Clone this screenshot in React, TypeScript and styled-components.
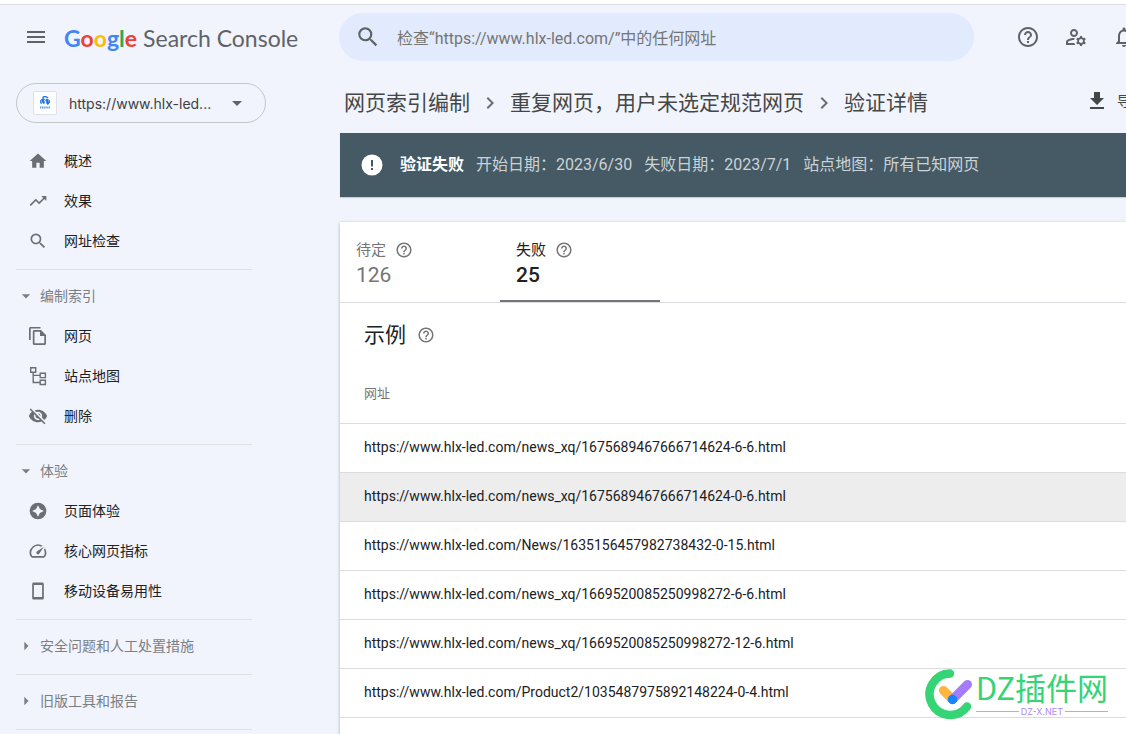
import React from "react";
import styled, { createGlobalStyle } from "styled-components";
import {
  MdMenu, MdSearch, MdHelpOutline, MdOutlineManageAccounts, MdNotificationsNone,
  MdHome, MdTrendingUp, MdVisibilityOff, MdArrowDropDown,
  MdArrowRight, MdOutlineSpeed, MdChevronRight, MdDownload,
} from "react-icons/md";

const GlobalStyle = createGlobalStyle`
  *, *::before, *::after { box-sizing: border-box; }
  body {
    margin: 0;
    background: #f1f4fd;
    color: #202124;
    font-family: Roboto, "Noto Sans CJK SC", sans-serif;
    font-size: 14px;
    line-height: 20px;
  }
  button, input { font: inherit; color: inherit; }
  button { border: 0; padding: 0; background: none; cursor: pointer; }
  a { color: inherit; text-decoration: none; }
  h1, h2, ul, ol, p { margin: 0; padding: 0; font-weight: 400; }
  ul, ol { list-style: none; }
  svg { display: block; flex: none; }
`;

const Page = styled.div`
  position: relative;
  display: flex;
  flex-direction: column;
  min-height: 100vh;
  overflow: hidden;
`;

const TopStrip = styled.div`
  height: 5px;
  background: #fff;
  border-bottom: 1px solid #dadce0;
`;

const Header = styled.header`
  display: flex;
  align-items: center;
  padding: 8px 0;
`;

const Brand = styled.div`
  display: flex;
  align-items: center;
  flex: 0 0 339px;
  padding-left: 24px;
  gap: 16px;
`;

const IconButton = styled.button`
  display: flex;
  align-items: center;
  justify-content: center;
  color: #5f6368;
`;

const Wordmark = styled.a`
  display: flex;
  gap: 6px;
  padding-top: 2px;
  font-family: Lato, "Liberation Sans", sans-serif;
  font-size: 23px;
  line-height: 28px;
  color: #5f6368;
  white-space: nowrap;
`;

const GoogleName = styled.span`
  font-weight: 700;
`;

const Letter = styled.span<{ $color: string }>`
  color: ${(p) => p.$color};
`;

const SearchBox = styled.label`
  display: flex;
  align-items: center;
  flex: 1;
  height: 48px;
  padding: 0 16px;
  gap: 16px;
  border-radius: 24px;
  background: #e1ebfd;
  color: #5f6368;
`;

const SearchInput = styled.input`
  flex: 1;
  min-width: 0;
  padding: 3px 0 0;
  border: 0;
  outline: 0;
  background: transparent;
  font-size: 16px;
  line-height: 24px;
  &::placeholder { color: #757575; opacity: 1; }
`;

const HeaderActions = styled.div`
  display: flex;
  flex: none;
  gap: 24px;
  margin: 0 -10px 0 42px;
`;

const Body = styled.div`
  display: flex;
  flex: 1;
`;

const Sidebar = styled.aside`
  flex: 0 0 340px;
  padding: 14px 0 0 16px;
`;

const PropertyButton = styled.button`
  display: flex;
  align-items: center;
  width: 250px;
  height: 40px;
  padding: 0 16px;
  margin-bottom: 18px;
  border: 1px solid #c4c7c5;
  border-radius: 20px;
  font-family: Inter, "Open Sans", sans-serif;
  color: #3c4043;
  svg { color: #5f6368; }
`;

const Favicon = styled.span`
  display: flex;
  align-items: center;
  justify-content: center;
  width: 24px;
  height: 24px;
  margin-right: 12px;
  border: 1px solid #dfe1e5;
  border-radius: 2px;
  background: #fff;
`;

const PropertyName = styled.span`
  flex: 1;
  padding-top: 1px;
  text-align: left;
  white-space: nowrap;
`;

const Nav = styled.nav`
  width: 236px;
`;

const NavGroup = styled.div`
  padding-bottom: 8px;
  margin-bottom: 6px;
  border-bottom: 1px solid #dfe1e3;
`;

const NavLink = styled.a`
  display: flex;
  align-items: center;
  height: 40px;
  padding-left: 12px;
  gap: 16px;
  svg { color: #6b6e72; }
`;

const GroupToggle = styled.button`
  display: flex;
  align-items: center;
  width: 100%;
  height: 40px;
  gap: 4px;
  color: #7b7e82;
  text-align: left;
`;

const Main = styled.main`
  display: flex;
  flex-direction: column;
  flex: 1;
  min-width: 0;
`;

const TitleBar = styled.div`
  display: flex;
  align-items: center;
  justify-content: space-between;
  height: 64px;
  padding-left: 4px;
`;

const Crumbs = styled.ol`
  display: flex;
  align-items: center;
  padding-top: 3px;
  font-size: 21px;
  line-height: 28px;
  color: #444746;
  white-space: nowrap;
`;

const Crumb = styled.li`
  display: flex;
  align-items: center;
  svg { margin: 0 8px; color: #6b6e72; }
`;

const ExportButton = styled.button`
  display: flex;
  align-items: center;
  gap: 8px;
  flex: none;
  margin-right: -19px;
  color: #444746;
  white-space: nowrap;
`;

const Banner = styled.section`
  display: flex;
  align-items: center;
  height: 64px;
  padding-left: 20px;
  gap: 12px;
  background: #465a65;
  box-shadow: 0 1px 1px rgba(60, 64, 67, 0.2);
  color: #ccd3d6;
  font-size: 16px;
  line-height: 24px;
  white-space: nowrap;
`;

const BannerTitle = styled.strong`
  margin-left: 4px;
  font-weight: 700;
  color: #fff;
`;

const Card = styled.section`
  flex: 1;
  margin-top: 25px;
  background: #fff;
  box-shadow: 0 1px 3px rgba(60, 64, 67, 0.4);
`;

const Tabs = styled.div`
  display: flex;
  border-bottom: 1px solid #dadce0;
`;

const Tab = styled.button<{ $active?: boolean }>`
  display: flex;
  flex-direction: column;
  align-items: flex-start;
  width: 160px;
  height: 80px;
  padding: 16px 16px 0;
  border-bottom: 2px solid ${(p) => (p.$active ? "#757575" : "transparent")};
  color: ${(p) => (p.$active ? "#202124" : "#757575")};
`;

const TabLabel = styled.span`
  display: flex;
  align-items: center;
  gap: 9px;
  font-size: 15px;
  line-height: 24px;
  svg { color: #757575; }
`;

const TabCount = styled.span<{ $active?: boolean }>`
  font-size: 21px;
  line-height: 26px;
  font-weight: ${(p) => (p.$active ? 500 : 400)};
`;

const SectionTitle = styled.h2`
  display: flex;
  align-items: center;
  height: 64px;
  padding-left: 24px;
  gap: 11px;
  font-size: 21px;
  line-height: 28px;
  svg { color: #757575; }
`;

const UrlTable = styled.table`
  width: 100%;
  border-collapse: separate;
  border-spacing: 0;
`;

const HeadCell = styled.th`
  height: 57px;
  padding: 0 24px 2px;
  border-bottom: 1px solid #dadce0;
  font-size: 13px;
  font-weight: 400;
  text-align: left;
  color: #757575;
`;

const UrlRow = styled.tr<{ $hovered?: boolean }>`
  background: ${(p) => (p.$hovered ? "#ededed" : "#fff")};
`;

const UrlCell = styled.td`
  height: 49px;
  padding: 0 24px 2px;
  border-bottom: 1px solid #dadce0;
`;

const Watermark = styled.div`
  position: absolute;
  right: 18px;
  bottom: 16px;
  display: flex;
  align-items: center;
  gap: 3px;
`;

const WatermarkText = styled.div`
  display: flex;
  flex-direction: column;
  gap: 5px;
`;

const WatermarkName = styled.span`
  font-family: "Noto Sans CJK SC", sans-serif;
  font-size: 31px;
  line-height: 30px;
  color: #35d474;
  white-space: nowrap;
`;

const WatermarkSite = styled.span`
  display: flex;
  align-items: center;
  gap: 2px;
  font-family: Inter, sans-serif;
  font-size: 9px;
  line-height: 10px;
  color: #a98bf5;
  &::before, &::after {
    content: "";
    flex: 1;
    height: 1px;
    background: #b9a3f7;
  }
`;

const PagesIcon = () => (
  <svg width="20" height="20" viewBox="0 0 20 20" fill="currentColor">
    <path d="M1 2.500C1 1.600 1.700 1 2.500 1H12.500V2.600H2.700V14H1z" />
    <path fillRule="evenodd" d="M6.300 4H13l5 5v8.500c0 .9-.7 1.500-1.500 1.500H6.300c-.9 0-1.500-.6-1.500-1.500v-12C4.800 4.600 5.400 4 6.300 4zM6.500 5.700v11.600h9.800V10H12V5.700z" />
  </svg>
);

const SitemapIcon = () => (
  <svg width="20" height="20" viewBox="0 0 20 20" fill="none" stroke="currentColor" strokeWidth="1.4">
    <path d="M2.700 1.700h5v4.600h-5zM12.200 7.200h5.200v4.400h-5.200zM12.200 14.200h5.200v4.300h-5.200zM5.200 6.300v10.200h7M5.200 9.400h7" />
  </svg>
);

const ExperienceIcon = () => (
  <svg width="20" height="20" viewBox="0 0 24 24" fill="currentColor">
    <path fillRule="evenodd" d="M12 2a10 10 0 1 0 0 20 10 10 0 0 0 0-20zm0 3 2.300 4.700 4.700 2.300-4.700 2.300L12 19l-2.300-4.700L5 12l4.700-2.300z" />
  </svg>
);

const PhoneIcon = () => (
  <svg width="20" height="20" viewBox="0 0 20 20" fill="currentColor">
    <path fillRule="evenodd" d="M5.800 1.500h8.400c.9 0 1.600.7 1.600 1.600v13.800c0 .9-.7 1.600-1.600 1.600H5.800c-.9 0-1.600-.7-1.600-1.600V3.100c0-.9.7-1.600 1.600-1.600zM5.900 4v12h8.200V4z" />
  </svg>
);

const AlertIcon = () => (
  <svg width="24" height="24" viewBox="0 0 24 24">
    <circle cx="12" cy="12" r="10.500" fill="#fff" />
    <path d="M11 7h2v6.500h-2zM11 15h2v2h-2z" fill="#465a65" />
  </svg>
);

const GlobeIcon = () => (
  <svg width="14" height="14" viewBox="0 0 14 14" fill="none" stroke="#1a73e0">
    <path d="M3.500 7.800A4 4 0 0 1 3 4M4.500 1.600A4.300 4.300 0 0 1 10 2M11.300 4.200A4.300 4.300 0 0 1 9.500 8.500" strokeWidth="1.300" />
    <path d="M3.500 3.200l2.200-1 1 1.300-1.200 1.300 1.300 1.200-.9 1.800-1.600-1.500zM8.200 3l2.200.6-.5 1.600 1 1-1.300 2-1.400-1.200.4-1.300-1-1z" fill="#1a73e0" strokeWidth=".6" />
    <path d="M2 11.500h10" strokeWidth="2" strokeDasharray="1.300 .5" opacity=".7" />
  </svg>
);

const CheckLogo = () => (
  <svg width="48" height="52" viewBox="0 0 48 52" fill="none" strokeLinecap="round">
    <path d="M25 5.600A20.700 20.700 0 1 0 42 38.500" stroke="#35d474" strokeWidth="8.500" />
    <path d="M18.500 22.500 27.500 31.500" stroke="#ffb63b" strokeWidth="9" />
    <path d="M27.500 31.500 42.500 16.500" stroke="#a67cff" strokeWidth="9" />
    <circle cx="27.500" cy="31.500" r="4.700" fill="#1684fc" />
  </svg>
);

const overview = [
  { label: "概述", icon: <MdHome size={20} /> },
  { label: "效果", icon: <MdTrendingUp size={20} /> },
  { label: "网址检查", icon: <MdSearch size={20} /> },
];

const groups = [
  {
    title: "编制索引",
    items: [
      { label: "网页", icon: <PagesIcon /> },
      { label: "站点地图", icon: <SitemapIcon /> },
      { label: "删除", icon: <MdVisibilityOff size={20} /> },
    ],
  },
  {
    title: "体验",
    items: [
      { label: "页面体验", icon: <ExperienceIcon /> },
      { label: "核心网页指标", icon: <MdOutlineSpeed size={20} /> },
      { label: "移动设备易用性", icon: <PhoneIcon /> },
    ],
  },
  { title: "安全问题和人工处置措施", items: [] },
  { title: "旧版工具和报告", items: [] },
];

const urls = [
  "https://www.hlx-led.com/news_xq/1675689467666714624-6-6.html",
  "https://www.hlx-led.com/news_xq/1675689467666714624-0-6.html",
  "https://www.hlx-led.com/News/1635156457982738432-0-15.html",
  "https://www.hlx-led.com/news_xq/1669520085250998272-6-6.html",
  "https://www.hlx-led.com/news_xq/1669520085250998272-12-6.html",
  "https://www.hlx-led.com/Product2/1035487975892148224-0-4.html",
];

const google: [string, string][] = [
  ["G", "#4285f4"], ["o", "#ea4335"], ["o", "#fbbc04"],
  ["g", "#4285f4"], ["l", "#34a853"], ["e", "#ea4335"],
];

export default function App() {
  return (
    <Page>
      <GlobalStyle />
      <TopStrip />
      <Header>
        <Brand>
          <IconButton aria-label="主菜单"><MdMenu size={24} /></IconButton>
          <Wordmark href="#">
            <GoogleName>
              {google.map(([ch, color], i) => <Letter key={i} $color={color}>{ch}</Letter>)}
            </GoogleName>
            <span>Search Console</span>
          </Wordmark>
        </Brand>
        <SearchBox>
          <MdSearch size={26} />
          <SearchInput type="text" aria-label="检查网址" placeholder="检查“https://www.hlx-led.com/”中的任何网址" />
        </SearchBox>
        <HeaderActions>
          <IconButton aria-label="帮助"><MdHelpOutline size={24} /></IconButton>
          <IconButton aria-label="用户设置"><MdOutlineManageAccounts size={24} /></IconButton>
          <IconButton aria-label="通知"><MdNotificationsNone size={24} /></IconButton>
        </HeaderActions>
      </Header>
      <Body>
        <Sidebar>
          <PropertyButton>
            <Favicon><GlobeIcon /></Favicon>
            <PropertyName>https://www.hlx-led...</PropertyName>
            <MdArrowDropDown size={24} />
          </PropertyButton>
          <Nav>
            <NavGroup>
              {overview.map((item) => (
                <NavLink href="#" key={item.label}>{item.icon}{item.label}</NavLink>
              ))}
            </NavGroup>
            {groups.map((group) => (
              <NavGroup key={group.title}>
                <GroupToggle aria-expanded={group.items.length > 0}>
                  {group.items.length > 0 ? <MdArrowDropDown size={20} /> : <MdArrowRight size={20} />}
                  {group.title}
                </GroupToggle>
                {group.items.map((item) => (
                  <NavLink href="#" key={item.label}>{item.icon}{item.label}</NavLink>
                ))}
              </NavGroup>
            ))}
          </Nav>
        </Sidebar>
        <Main>
          <TitleBar>
            <Crumbs>
              <Crumb><a href="#">网页索引编制</a><MdChevronRight size={24} /></Crumb>
              <Crumb><a href="#">重复网页，用户未选定规范网页</a><MdChevronRight size={24} /></Crumb>
              <Crumb>验证详情</Crumb>
            </Crumbs>
            <ExportButton><MdDownload size={24} />导出</ExportButton>
          </TitleBar>
          <Banner>
            <AlertIcon />
            <BannerTitle>验证失败</BannerTitle>
            <span>开始日期：2023/6/30</span>
            <span>失败日期：2023/7/1</span>
            <span>站点地图：所有已知网页</span>
          </Banner>
          <Card>
            <Tabs role="tablist">
              <Tab role="tab" aria-selected="false">
                <TabLabel>待定<MdHelpOutline size={18} /></TabLabel>
                <TabCount>126</TabCount>
              </Tab>
              <Tab role="tab" aria-selected="true" $active>
                <TabLabel>失败<MdHelpOutline size={18} /></TabLabel>
                <TabCount $active>25</TabCount>
              </Tab>
            </Tabs>
            <SectionTitle>示例<MdHelpOutline size={18} /></SectionTitle>
            <UrlTable>
              <thead>
                <tr><HeadCell scope="col">网址</HeadCell></tr>
              </thead>
              <tbody>
                {urls.map((url, i) => (
                  <UrlRow key={url} $hovered={i === 1}><UrlCell>{url}</UrlCell></UrlRow>
                ))}
              </tbody>
            </UrlTable>
          </Card>
        </Main>
      </Body>
      <Watermark>
        <CheckLogo />
        <WatermarkText>
          <WatermarkName>DZ插件网</WatermarkName>
          <WatermarkSite>DZ-X.NET</WatermarkSite>
        </WatermarkText>
      </Watermark>
    </Page>
  );
}
